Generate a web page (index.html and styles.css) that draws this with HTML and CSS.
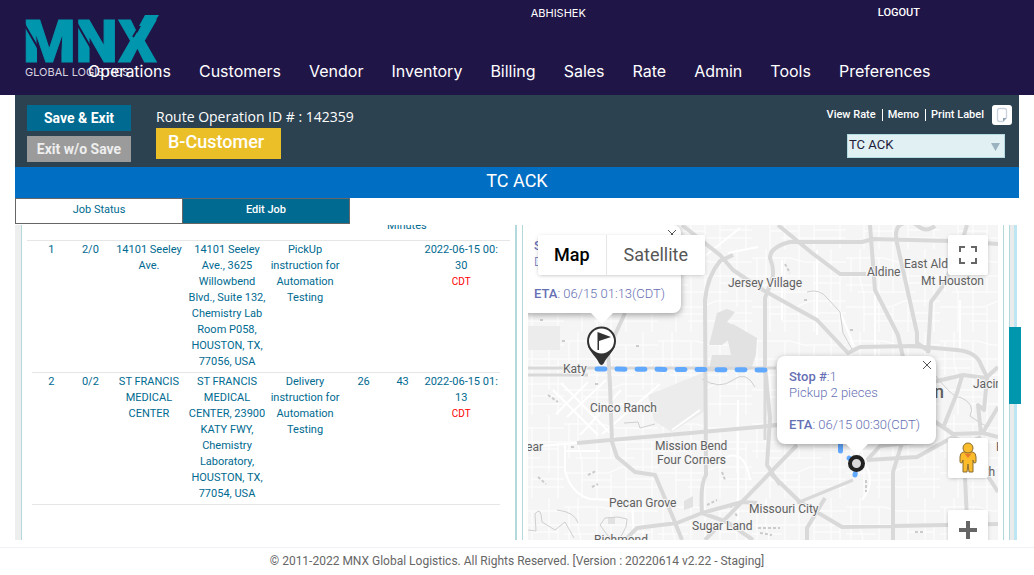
FILE: index.html
```html
<!DOCTYPE html>
<html lang="en">
<head>
<meta charset="utf-8">
<title>MNX Global Logistics - Route Operation</title>
<link rel="stylesheet" href="styles.css">
</head>
<body>
<header class="site-header">
  <svg class="logo" width="150" height="68" viewBox="0 0 150 68" role="img" aria-label="MNX Global Logistics">
    <text class="logo-name" x="-2" y="50">MNX</text>
    <path class="logo-cut" d="M-2 10L13 36M51 10L66 36M108 25L121 3"/>
    <path class="logo-accent" d="M120 3H134L127 14H114Z"/>
    <text class="logo-tag" x="0" y="64">GLOBAL LOGISTICS</text>
  </svg>
  <div class="user-bar">
    <span>ABHISHEK</span>
    <a class="logout" href="#">LOGOUT</a>
  </div>
  <nav class="main-nav">
    <a href="#">Operations</a><a href="#">Customers</a><a href="#">Vendor</a><a href="#">Inventory</a><a href="#">Billing</a><a href="#">Sales</a><a href="#">Rate</a><a href="#">Admin</a><a href="#">Tools</a><a href="#">Preferences</a>
  </nav>
</header>

<main class="page">
  <section class="job-bar">
    <div class="actions">
      <button class="btn btn-save" type="button">Save &amp; Exit</button>
      <button class="btn btn-exit" type="button">Exit w/o Save</button>
    </div>
    <div class="job-id">
      <div class="job-number">Route Operation ID # : 142359</div>
      <div class="customer">B-Customer</div>
    </div>
    <div class="job-tools">
      <div class="tool-links">
        <a href="#">View Rate</a><a href="#">Memo</a><a href="#">Print Label</a>
        <button class="note-btn" type="button" aria-label="Notes">
          <svg width="20" height="20" viewBox="0 0 20 20"><path d="M7.500 3.500h5q2 0 2 2v7l-3.500 4H7.500q-2 0-2-2v-9q0-2 2-2z" fill="#fff" stroke="#c9d2dc" stroke-width="1.300"/><path d="M11 16.500v-3.500h3.500z" fill="#8fa3b0"/></svg>
        </button>
      </div>
      <div class="status-field">
        <select class="status-select" aria-label="Status"><option>TC ACK</option></select>
        <svg class="status-arrow" width="9" height="8" viewBox="0 0 9 8"><path d="M0 0H9L4.500 8Z" fill="#9bb3bf"/></svg>
      </div>
    </div>
  </section>
  <h1 class="status-title">TC ACK</h1>
  <div class="tabs">
    <button class="tab" type="button">Job Status</button>
    <button class="tab tab-active" type="button">Edit Job</button>
  </div>

  <div class="workspace">
    <section class="stops">
      <table class="stops-table">
        <colgroup><col class="edge-start"><col class="narrow"><col class="narrow"><col class="wide"><col class="wide"><col class="wide"><col class="narrow"><col class="narrow"><col class="wide"><col class="edge-end"></colgroup>
        <thead>
          <tr><th></th><th></th><th></th><th></th><th></th><th></th><th></th><th class="minutes">Minutes</th><th></th><th></th></tr>
        </thead>
        <tbody>
          <tr><td></td><td>1</td><td>2/0</td><td>14101 Seeley Ave.</td><td>14101 Seeley Ave., 3625 Willowbend Blvd., Suite 132, Chemistry Lab Room P058, HOUSTON, TX, 77056, USA</td><td>PickUp instruction for Automation Testing</td><td></td><td></td><td>2022-06-15 00:<br>30<br><span class="zone">CDT</span></td><td></td></tr>
          <tr><td></td><td>2</td><td>0/2</td><td>ST FRANCIS MEDICAL CENTER</td><td>ST FRANCIS MEDICAL CENTER, 23900 KATY FWY, Chemistry Laboratory, HOUSTON, TX, 77054, USA</td><td>Delivery instruction for Automation Testing</td><td>26</td><td>43</td><td>2022-06-15 01:<br>13<br><span class="zone">CDT</span></td><td></td></tr>
        </tbody>
      </table>
    </section>

    <section class="map-panel">
      <div class="map">
        <svg class="map-art" viewBox="528 225 470 315" preserveAspectRatio="xMinYMin slice">
          <defs>
            <pattern id="streets" width="94" height="83" patternUnits="userSpaceOnUse">
              <path class="street" d="M0 9H38L52 13H94M0 27H94M12 43H70M0 58H44L58 52H94M30 72H94M14 0V30L18 45V83M33 9V83M47 0V44M62 13V83M79 0V58M88 27V83M47 58V83M0 36H30M62 34H88M18 65H47M62 64H94M5 9V43"/>
            </pattern>
          </defs>
          <rect x="528" y="225" width="470" height="315" fill="#f5f5f5"/>
          <rect x="528" y="225" width="470" height="315" fill="url(#streets)"/>
          <path fill="#ececec" d="M648 395L705 372V411L672 432L654 421ZM528 326H560V350H528Z"/>
          <path fill="#e2e2e2" d="M709 345L717 313L727 309L735 312L727 322L733 325L732 337L722 345ZM726 332L733 324L757 338L756 354L751 370H709L712 355H731ZM684 501L693 496V507L684 510ZM608 517H615V524H608Z"/>
          <path class="street diagonal" d="M553 390L598 435M561 383L615 438M567 417L606 380M580 435L621 390M556 414L588 382M602 434L660 384M565 443L565 470Q570 493 590 499L615 500M528 447L577 443M564 451H600M632 500L634 540M672 430L700 410M700 260L740 228M758 247L728 253M782 260V320M817 250V335M875 290V360M960 300V350M738 400V520M720 460Q745 445 750 480M840 312L854 346M862 500Q878 480 862 460"/>
          <path class="creek" d="M528 530L536 531L535 514Q541 505 542 522L555 530L565 522L574 538M600 525L605 518L618 517L627 519L626 527L619 540L608 536L600 525M807 292Q820 288 828 299L840 312L843 333L853 351M935 375Q955 400 960 397Q976 404 970 416Q993 432 988 424M702 379Q720 390 733 380T755 387M624 423L638 422L640 428L655 424M557 510Q575 512 578 523"/>
          <path class="speckle" d="M538 477L546 484M588 475L596 471M592 487L598 484M540 320H543M562 341H567M636 346H640M785 264L790 273M850 330H853M722 472L725 480M707 505L717 500M730 505L737 516M758 528H780M760 533L772 535M866 480V492M915 532H925M548 395L558 402M595 384H600M571 447H575M804 300H809"/>
          <g class="road">
            <path d="M682 225L720 255L733 270L763 290L817 320L848 353L860 347L913 346L957 350Q977 352 981 365L987 377L998 367"/>
            <path d="M733 255L720 261Q707 277 705 300L706 475Q700 484 702 513"/>
            <path d="M998 244L950 241L873 239L862 242H790Q770 247 770 258Q775 270 772 280L765 298V367L770 418L767 465L780 485"/>
            <path d="M778 225L812 253L840 274H866M870 225L875 290L898 335L903 357"/>
            <path d="M935 226Q926 233 918 226T900 225Q894 230 897 243L917 333V343L930 352M967 225L958 255L942 287L931 302L928 353"/>
            <path d="M933 382L963 375L987 378L984 410L978 405L981 434M943 428L957 393L962 376M921 412L953 434L983 433L998 437M953 437L917 457L867 460M981 437L967 443L953 437M998 407L982 434"/>
            <path d="M903 440L893 472V540M867 460L880 446L915 442M797 445L705 540M770 473L800 502L842 527L998 524M825 498L807 528V540M965 477L967 520M984 470L998 492"/>
            <path d="M625 313L608 350L610 385L612 442L617 457L635 472L655 475L672 515L682 540M577 443L780 425M625 540L637 528L677 523L702 513L742 502L757 503M702 513L727 522L753 540"/>
            <path class="minor" d="M528 368H776M528 375H588M853 480L797 503M770 425L800 423M765 370V440M705 370H720"/>
          </g>
          <path class="route" d="M597 369L776 370"/>
          <path class="route" d="M840.500 443V453L849 458L857 463L855 475"/>
          <g class="place">
            <text x="728" y="287">Jersey Village</text><text x="867" y="276">Aldine</text><text x="904" y="268">East Aldine</text><text x="921" y="285">Mt Houston</text>
            <text x="563" y="373">Katy</text><text x="590" y="412">Cinco Ranch</text><text x="655" y="450">Mission Bend</text><text x="657" y="464">Four Corners</text>
            <text x="609" y="507">Pecan Grove</text><text x="749" y="513">Missouri City</text><text x="692" y="530">Sugar Land</text><text x="594" y="544">Richmond</text>
            <text x="973" y="388">Jacinto City</text><text x="543" y="451" text-anchor="end">Fulshear</text><text x="995" y="476" text-anchor="end">South</text><text x="996" y="451">H</text>
            <text class="city" x="944" y="398" text-anchor="end">Houston</text>
          </g>
          <g>
            <path d="M588 346C590 352 597 358 599 363Q601.500 367 604 363C606 358 613 352 615 346Z" fill="#333"/>
            <circle cx="601.500" cy="341" r="13.500" fill="#fff" stroke="#333" stroke-width="2"/>
            <path d="M597.500 332L611 337L599 341V350H597.500Z" fill="#333"/>
          </g>
          <circle cx="856.500" cy="463.500" r="6.500" fill="#d9d9d9" stroke="#222" stroke-width="4"/>
        </svg>

        <div class="info info-delivery">
          <button class="info-close" type="button" aria-label="Close"><svg width="10" height="10" viewBox="0 0 10 10"><path d="M1 1L9 9M9 1L1 9"/></svg></button>
          <p><b>Stop #</b>:2</p><p>Delivery 2 pieces</p><p class="eta"><b>ETA</b>: 06/15 01:13(CDT)</p>
        </div>
        <div class="info info-pickup">
          <button class="info-close" type="button" aria-label="Close"><svg width="10" height="10" viewBox="0 0 10 10"><path d="M1 1L9 9M9 1L1 9"/></svg></button>
          <p><b>Stop #</b>:1</p><p>Pickup 2 pieces</p><p class="eta"><b>ETA</b>: 06/15 00:30(CDT)</p>
        </div>

        <div class="map-types">
          <button class="map-type selected" type="button">Map</button>
          <button class="map-type" type="button">Satellite</button>
        </div>
        <button class="control fullscreen" type="button" aria-label="Toggle fullscreen"><svg width="18" height="18" viewBox="0 0 18 18"><path d="M1 6V1H6M12 1H17V6M17 12V17H12M6 17H1V12" fill="none" stroke="#666" stroke-width="2"/></svg></button>
        <button class="control pegman" type="button" aria-label="Street View"><svg width="18" height="32" viewBox="0 0 18 32"><g fill="#fbbc2c" stroke="#8b6c31" stroke-width="1"><path d="M4 10Q1 11 1 15V20Q1 21 3 21L4 18V30H8L9 22L10 30H14V18L15 21Q17 21 17 20V15Q17 11 14 10Z"/><circle cx="9" cy="6" r="5"/></g><path d="M5 11L9 16L13 11Q9 13 5 11Z" fill="#e47c2b"/></svg></button>
        <button class="control zoom-in" type="button" aria-label="Zoom in"><svg width="18" height="18" viewBox="0 0 18 18"><path d="M7 0H11V7H18V11H11V18H7V11H0V7H7Z" fill="#666"/></svg></button>
      </div>
    </section>
    <div class="side-track"><div class="side-handle"></div></div>
  </div>
</main>
<footer class="site-footer">© 2011-2022 MNX Global Logistics. All Rights Reserved. [Version : 20220614 v2.22 - Staging]</footer>
</body>
</html>
```
FILE: styles.css
```css
* { box-sizing: border-box; }
body {
  margin: 0;
  height: 100vh;
  display: flex;
  flex-direction: column;
  overflow: hidden;
  background: #fff;
  color: #006a90;
  font: 11px/16px Roboto, "Liberation Sans", sans-serif;
}
button, select { font: inherit; margin: 0; border: 0; border-radius: 0; }
button { padding: 0; cursor: pointer; }
a { color: inherit; text-decoration: none; }
p { margin: 0; }

.site-header {
  position: relative;
  flex: none;
  background: #201547;
  color: #fff;
  padding: 5px 0 14px;
}
.logo { position: absolute; left: 25px; top: 12px; overflow: visible; }
.logo-name { font: 900 60px Roboto, sans-serif; fill: #0097ae; stroke: #0097ae; stroke-width: 1; }
.logo-cut { fill: none; stroke: #201547; stroke-width: 2; }
.logo-accent { fill: #0097ae; }
.logo-tag { font: 11px Inter, sans-serif; fill: #d7d3e0; }
.user-bar {
  display: flex;
  justify-content: flex-end;
  gap: 292px;
  padding-right: 114px;
  font-family: Inter, sans-serif;
}
.logout { font-family: Roboto, sans-serif; font-weight: 500; }
.main-nav {
  position: relative;
  display: flex;
  gap: 28px;
  padding: 40px 0 0 88px;
  font: 16px/20px Inter, sans-serif;
}

.page { flex: 1; min-height: 0; display: flex; flex-direction: column; margin: 0 15px; }
.job-bar { flex: none; display: flex; background: #2c4251; color: #fff; padding: 10px 7px 5px 12px; }
.actions { display: flex; flex-direction: column; gap: 5px; width: 104px; }
.btn { height: 26px; color: #fff; font-size: 14px; font-weight: 700; }
.btn-save { background: #006a90; }
.btn-exit { background: #9b9b9b; color: #eee; }
.job-id { margin-left: 25px; }
.job-number { font: 14px/23px "Open Sans", sans-serif; }
.customer { width: 125px; height: 31px; padding-left: 12px; background: #ebbf27; font-size: 18px; font-weight: 500; line-height: 28px; }
.job-tools { margin-left: auto; display: flex; flex-direction: column; gap: 9px; }
.tool-links { display: flex; align-items: center; font-weight: 500; }
.tool-links a { line-height: 12px; padding: 0 6px 0 5px; border-left: 1px solid #fff; }
.tool-links a:first-child { border-left: 0; }
.note-btn { width: 20px; height: 20px; margin-left: 2px; border-radius: 3px; background: #fff; }
.note-btn svg { display: block; }
.status-field { position: relative; width: 158px; margin-left: auto; margin-right: 7px; }
.status-select { appearance: none; display: block; width: 100%; height: 24px; padding: 0 0 2px 1px; border: 1px solid #b3dbe1; background: #e0f0f3; color: #20203a; font-size: 13px; }
.status-arrow { position: absolute; right: 5px; top: 9px; pointer-events: none; }
.status-title { flex: none; margin: 0; background: #006ec2; color: #fff; text-align: center; font-size: 18px; font-weight: 400; line-height: 28px; padding-bottom: 3px; }
.tabs { flex: none; display: flex; width: 335px; height: 26px; border: 1px solid #666; }
.tab { flex: 1; padding-bottom: 2px; background: #fff; color: #006a90; }
.tab-active { background: #006a90; color: #fff; font-weight: 500; border-left: 1px solid #666; }

.workspace { flex: 1; min-height: 0; display: flex; margin: 1px 0 7px; }
.stops { flex: 1 1 502px; min-width: 0; overflow: hidden; border-left: 6px solid #ecefee; border-right: 2px solid #b3d9dc; box-shadow: inset 1px 0 #b3d9dc; padding: 0 5px 0 6px; }
.stops-table { width: 100%; margin-top: -7px; table-layout: fixed; border-collapse: separate; border-spacing: 0; text-align: center; }
.edge-start { width: 1%; }
.edge-end { width: 2%; }
.narrow { width: 8%; }
.wide { width: 16%; }
.stops-table th { height: 23px; padding: 0 0 6px; border-bottom: 1px solid #e6e6e6; font-weight: 400; white-space: nowrap; }
.stops-table .minutes { padding-left: 4px; text-align: left; }
.stops-table td { padding: 1px 0 2px; border-bottom: 1px solid #e6e6e6; vertical-align: top; }
.stops-table td:first-child, .stops-table td:last-child { border-bottom: 0; }
.zone { color: #f00; font-size: 10px; }

.map-panel { flex: 1 1 482px; min-width: 0; display: flex; margin-left: 5px; padding: 0 5px; border: solid #b3d9dc; border-width: 0 1px; }
.map { position: relative; flex: 1; overflow: hidden; }
.map-art { display: block; width: 100%; height: 100%; }
.street { fill: none; stroke: #fff; stroke-width: 1; }
.diagonal { stroke-width: 2; }
.creek { fill: none; stroke: #cfcfcf; stroke-width: 1; }
.speckle { fill: none; stroke: #cbcbcb; stroke-width: 2; stroke-dasharray: 3 2; }
.road { fill: none; stroke: #d9d9d9; stroke-width: 4; stroke-linejoin: round; }
.minor { stroke-width: 3; }
.route { fill: none; stroke: #61a8ff; stroke-width: 5; stroke-linecap: round; stroke-dasharray: 8 12; }
.place { font: 12px Roboto, sans-serif; fill: #616161; stroke: #f5f5f5; stroke-width: 2; paint-order: stroke; }
.city { font-size: 18px; font-weight: 500; }
.info {
  position: absolute;
  width: 159px;
  height: 88px;
  padding: 13px 12px;
  border-radius: 8px;
  background: #fff;
  box-shadow: 0 2px 6px rgba(0, 0, 0, .35);
  color: #6670b4;
  font-size: 13px;
  font-weight: 300;
}
.info::after { content: ""; position: absolute; left: 69px; top: 100%; border: solid transparent; border-width: 11px 11px 0; border-top-color: #fff; }
.info b { font-weight: 500; }
.info-delivery { left: -6px; top: 0; }
.info-pickup { left: 249px; top: 131px; }
.info .eta { margin-top: 16px; }
.info-close { position: absolute; right: 4px; top: 4px; width: 10px; height: 10px; background: none; }
.info-close svg { display: block; fill: none; stroke: #555; stroke-width: 1; }
.map-types { position: absolute; left: 10px; top: 10px; display: flex; height: 40px; border-radius: 2px; background: #fff; box-shadow: 0 1px 4px -1px rgba(0, 0, 0, .3); }
.map-type { padding: 0 17px; background: none; color: #565656; font-size: 18px; }
.map-type.selected { padding: 0 16px; color: #000; font-weight: 500; border-right: 1px solid #e6e6e6; }
.control { position: absolute; right: 10px; display: flex; align-items: center; justify-content: center; width: 40px; height: 40px; border-radius: 2px; background: #fff; box-shadow: 0 1px 4px -1px rgba(0, 0, 0, .3); }
.fullscreen { top: 10px; }
.pegman { top: 213px; }
.zoom-in { top: 285px; }
.side-track { position: relative; flex: none; width: 8px; margin: 0 2px 0 5px; border-left: 1px solid #b3d9dc; border-right: 3px solid #bde6f2; background: #e9ecea; }
.side-handle { position: absolute; left: -1px; top: 102px; width: 12px; height: 77px; background: #0097ae; }
.site-footer { flex: none; height: 28px; border-top: 1px solid #f0f0f5; color: #666; text-align: center; font-size: 12px; line-height: 26px; }
```
